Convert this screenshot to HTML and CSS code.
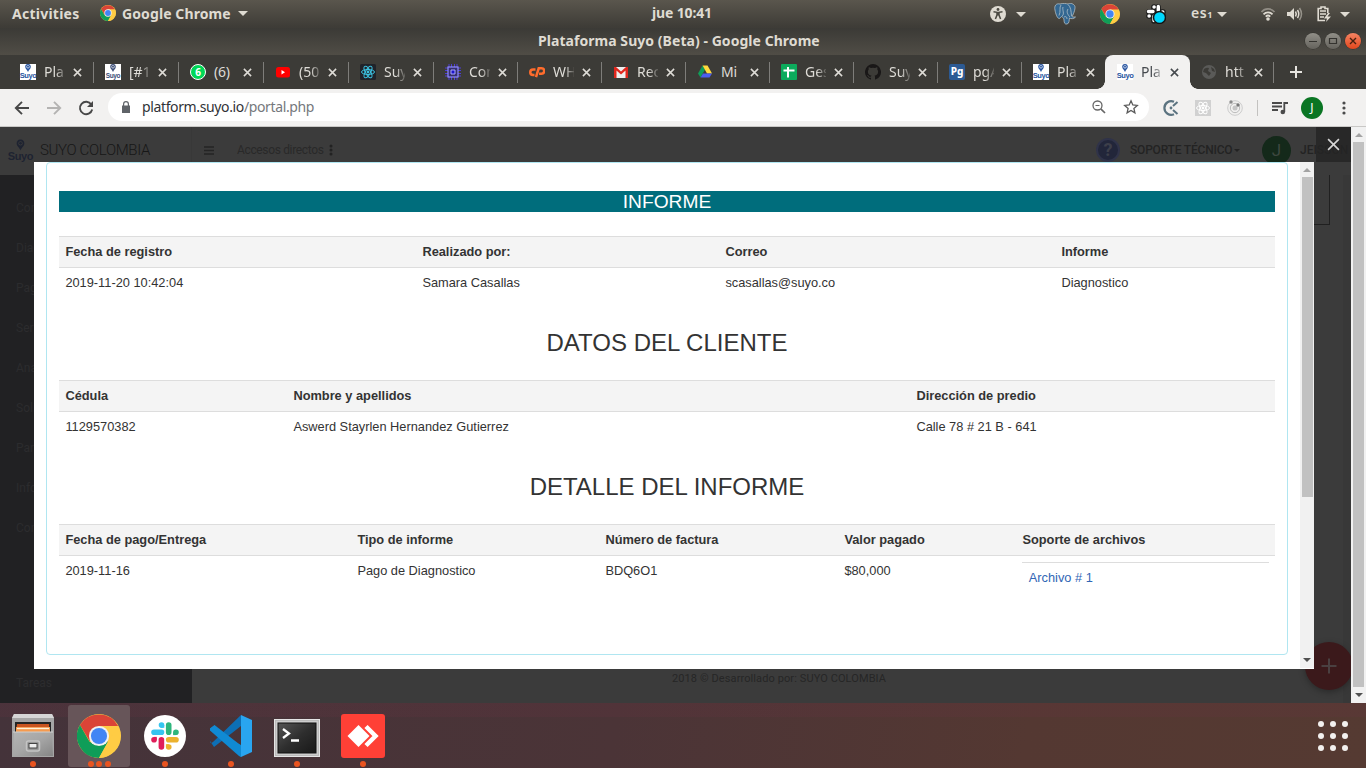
FILE: index.html
```html
<!DOCTYPE html>
<html lang="es">
<head>
<meta charset="utf-8">
<title>Plataforma Suyo (Beta)</title>
<link rel="stylesheet" href="styles.css">
</head>
<body>
<svg class="defs" width="0" height="0">
  <symbol id="chrome" viewBox="0 0 48 48">
    <circle cx="24" cy="24" r="24" fill="#fc4"/>
    <path d="M3.2 12A24 24 0 0 1 44.8 13H24L14 30Z" fill="#db4437"/>
    <path d="M3.2 12 13.5 30 20 34 34 30 24 48A24 24 0 0 1 3.2 12Z" fill="#0f9d58"/>
    <path d="M34 30 44.8 13A24 24 0 0 1 24 48Z" fill="#fc4"/>
    <circle cx="24" cy="24" r="11" fill="#f1f1f1"/><circle cx="24" cy="24" r="8.8" fill="#4285f4"/>
  </symbol>
  <symbol id="x" viewBox="0 0 10 10"><path d="M1 1 9 9M9 1 1 9" fill="none" stroke="currentColor" stroke-width="1.7"/></symbol>
  <symbol id="caret" viewBox="0 0 10 5"><path d="M0 0H10L5 5Z" fill="currentColor"/></symbol>
  <symbol id="pin" viewBox="0 0 8 8"><path fill-rule="evenodd" d="M4 0C6 0 6.8 1.3 6.8 2.8 6.8 5 4.800 5.800 4 8 3.200 5.800 1.200 5 1.200 2.800 1.200 1.300 2 0 4 0ZM4 1.200A1.600 1.600 0 1 0 4 4.400 1.600 1.600 0 1 0 4 1.200Z" fill="currentColor"/><circle cx="4" cy="2.800" r="1" fill="currentColor"/></symbol>
  <symbol id="atom" viewBox="0 0 16 16"><g fill="none" stroke="currentColor"><ellipse cx="8" cy="8" rx="6.500" ry="2.500"/><ellipse cx="8" cy="8" rx="6.500" ry="2.500" transform="rotate(60 8 8)"/><ellipse cx="8" cy="8" rx="6.500" ry="2.500" transform="rotate(120 8 8)"/></g><circle cx="8" cy="8" r="1.400" fill="currentColor"/></symbol>
</svg>

<header class="panel">
  <span class="activities">Activities</span>
  <svg class="app-icon" width="16" height="16"><use href="#chrome"/></svg>
  <span class="app-name">Google Chrome</span>
  <svg class="caret" width="10" height="5"><use href="#caret"/></svg>
  <span class="clock">jue 10:41</span>
  <div class="tray">
    <svg width="16" height="16" viewBox="0 0 16 16"><circle cx="8" cy="8" r="8" fill="#dfdbd2"/><circle cx="8" cy="3.500" r="1.400" fill="#4b4942"/><path d="M3.500 5.800 7 6.300V9L5.400 13M12.500 5.800 9 6.300V9L10.600 13M8 6V9.500" fill="none" stroke="#4b4942" stroke-width="1.500"/></svg>
    <svg width="10" height="5"><use href="#caret"/></svg>
    <svg width="22" height="22" viewBox="0 0 22 22"><path d="M6 1C2 0 0 3 1 7 1.600 10.500 3 15 5 15.500 6 15.600 7 14 7.500 13.500 9 14.500 10 15 10 17 10 20 11 21.500 13 21 15.500 20.500 15 17 15.500 15 17 16 20 16 21.500 14 19.500 14 18.500 14 18 13.500 20 10.500 22 4 20.500 2.500 18.500 0 15.500 0 14 1 12 .5 9 0 6 1Z" fill="#336791" stroke="#c3cbd0" stroke-width=".7"/><path d="M7 2C5 4 7 9 5 12.500M8 13C11 11 8 7 9 4M14 1.500C17 4 17 8 17.500 13M14 6C12 9 14 12 16 14M10 14C12 13 13 14 13 16" fill="none" stroke="#c3cbd0" stroke-width=".7"/></svg>
    <svg width="20" height="20"><use href="#chrome"/></svg>
    <svg width="20" height="20" viewBox="0 0 20 20"><g stroke="#1b1b1b" stroke-width="5.600" stroke-linecap="round" fill="none"><path d="M8 3V7M3 8H7M12 3V7M16 8H17M3 12H7M8 16V17"/></g><g stroke="#fff" stroke-width="3.400" stroke-linecap="round" fill="none"><path d="M12.300 2.500V7M2.500 7.500H7M8 3H8.200M16.500 8H16.800M3 12H3.300M8 12.300V16.500"/></g><circle cx="13.500" cy="13.500" r="6" fill="#00d8ff" stroke="#151515" stroke-width="1.500"/></svg>
    <span class="lang">es<small>1</small></span>
    <svg width="10" height="5"><use href="#caret"/></svg>
    <svg width="16" height="14" viewBox="0 0 16 14"><g fill="none" stroke="#dfdbd2" stroke-width="1.800"><path d="M1.500 5C5 .8 11 .8 14.500 5" opacity=".45"/><path d="M3.500 7.300C6 4.700 10 4.700 12.500 7.300"/><path d="M5.700 9.600C7 8.400 9 8.400 10.300 9.600"/></g><circle cx="8" cy="12" r="1.800" fill="#dfdbd2"/></svg>
    <svg width="16" height="14" viewBox="0 0 16 14"><path d="M0 5H3L7 1V13L3 9H0Z" fill="#dfdbd2"/><g fill="none" stroke="#dfdbd2" stroke-width="1.500"><path d="M8.500 4.500Q10 7 8.500 9.500M10.500 3Q13 7 10.500 11"/><path d="M12.500 1Q16.500 7 12.500 13" opacity=".5"/></g></svg>
    <svg width="14" height="16" viewBox="0 0 14 16"><path d="M8 14.500H1.200V2.500H4V1H8V2.500H10.800V7" fill="none" stroke="#dfdbd2" stroke-width="1.600"/><path d="M3 5H9M3 8H9M3 11H7" stroke="#dfdbd2" stroke-width="1.600"/><path d="M11 7 7 12.500H10L9 16 14 10.500H10.500L13 7Z" fill="#dfdbd2"/></svg>
    <svg width="10" height="5"><use href="#caret"/></svg>
  </div>
</header>

<div class="titlebar">
  <span class="win-title">Plataforma Suyo (Beta) - Google Chrome</span>
  <div class="win-buttons">
    <svg class="wb" viewBox="0 0 16 16"><path d="M4 8.500H12" stroke="#34332f" stroke-width="1.200"/></svg>
    <svg class="wb" viewBox="0 0 16 16"><path d="M4.500 5.500H11.500V10.500H4.500Z" fill="none" stroke="#34332f" stroke-width="1.200"/></svg>
    <svg class="wb wb-close" viewBox="0 0 16 16"><path d="M5 5 11 11M11 5 5 11" stroke="#47200f" stroke-width="1.400"/></svg>
  </div>
</div>

<nav class="tabs">
  <div class="tab wide"><span class="suyo-fav"><svg width="8" height="8"><use href="#pin"/></svg><b>Suyo</b></span><span class="tt">Pla</span><svg class="tx"><use href="#x"/></svg></div>
  <div class="tab wide"><span class="suyo-fav dim"><svg width="8" height="8"><use href="#pin"/></svg><b>Suyo</b></span><span class="tt">[#1</span><svg class="tx"><use href="#x"/></svg></div>
  <div class="tab wide"><span class="fav whats">6</span><span class="tt plain">(6)</span><svg class="tx"><use href="#x"/></svg></div>
  <div class="tab wide"><svg class="fav" viewBox="0 0 16 16"><rect x="1" y="3" width="14" height="10.500" rx="2.500" fill="#f00"/><path d="M6.500 6V10.500L10 8.200Z" fill="#fff"/></svg><span class="tt">(50</span><svg class="tx"><use href="#x"/></svg></div>
  <div class="tab wide"><svg class="fav react" viewBox="0 0 16 16"><rect width="16" height="16" rx="1.500" fill="#20232a"/><use href="#atom"/></svg><span class="tt">Suy</span><svg class="tx"><use href="#x"/></svg></div>
  <div class="tab"><svg class="fav" viewBox="0 0 16 16"><path d="M4 0V16M6.500 0V16M9.500 0V16M12 0V16M0 4H16M0 6.500H16M0 9.500H16M0 12H16" stroke="#4c3fd8"/><rect x="3" y="3" width="10" height="10" fill="#35306c" stroke="#8f8bff" stroke-width="1.200"/><path d="M6 6H10V10H6Z" fill="#1c15c9" stroke="#aaa6ff"/></svg><span class="tt">Con</span><svg class="tx"><use href="#x"/></svg></div>
  <div class="tab"><svg class="fav" viewBox="0 0 16 16"><path d="M6.500 5.500H4A2.600 2.600 0 0 0 4 11H5.500M7 13.200 9.700 4.300H12.500A2.600 2.600 0 0 1 12.500 9.700H10" fill="none" stroke="#ff6c2c" stroke-width="2.500"/></svg><span class="tt">WH</span><svg class="tx"><use href="#x"/></svg></div>
  <div class="tab"><svg class="fav" viewBox="0 0 16 16"><path d="M2 3H14V14H2Z" fill="#eee"/><path d="M1 3H3L8 7.500 13 3H15V14H12.500V6.500L8 10.500 3.500 6.500V14H1Z" fill="#e0261d"/></svg><span class="tt">Rec</span><svg class="tx"><use href="#x"/></svg></div>
  <div class="tab"><svg class="fav" viewBox="0 0 16 16"><path d="M5.500 1.500 1 9.500 3.500 13.500 8 5.500Z" fill="#0f9d58"/><path d="M5.500 1.500H10.500L15 9.500H10Z" fill="#ffd93d"/><path d="M6 9.500H15L12.500 13.500H3.500Z" fill="#4a5ff0"/></svg><span class="tt plain">Mi</span><svg class="tx"><use href="#x"/></svg></div>
  <div class="tab"><svg class="fav" viewBox="0 0 16 16"><rect width="16" height="16" rx="1" fill="#0cab5c"/><path d="M2.500 6.500H13.500M7 3V13.500" stroke="#fff" stroke-width="2"/></svg><span class="tt">Ges</span><svg class="tx"><use href="#x"/></svg></div>
  <div class="tab"><svg class="fav" viewBox="0 0 16 16"><path d="M8 0A8 8 0 0 0 5.500 15.600C6 15.700 6 15.400 6 15.200V13.800C3.800 14.200 3.300 12.800 3.300 12.800 2.900 11.900 2.400 11.600 2.400 11.600 1.700 11.100 2.500 11.100 2.500 11.100 3.300 11.200 3.700 12 3.700 12 4.400 13.200 5.500 12.800 6 12.600 6.100 12.100 6.300 11.700 6.500 11.500 4.700 11.300 2.900 10.600 2.900 7.500 2.900 6.700 3.200 5.900 3.700 5.400 3.700 5.200 3.400 4.400 3.800 3.300 3.800 3.300 4.500 3.100 6 4.100A7.500 7.500 0 0 1 10 4.100C11.500 3.100 12.200 3.300 12.200 3.300 12.600 4.400 12.300 5.200 12.300 5.400 12.800 5.900 13.100 6.700 13.100 7.500 13.100 10.600 11.300 11.300 9.500 11.500 9.800 11.700 10 12.200 10 13V15.200C10 15.400 10.100 15.700 10.500 15.600A8 8 0 0 0 8 0Z" fill="#191717"/></svg><span class="tt">Suy</span><svg class="tx"><use href="#x"/></svg></div>
  <div class="tab"><span class="fav pg">Pg</span><span class="tt">pgA</span><svg class="tx"><use href="#x"/></svg></div>
  <div class="tab last"><span class="suyo-fav"><svg width="8" height="8"><use href="#pin"/></svg><b>Suyo</b></span><span class="tt">Pla</span><svg class="tx"><use href="#x"/></svg></div>
  <div class="tab active"><span class="suyo-fav"><svg width="8" height="8"><use href="#pin"/></svg><b>Suyo</b></span><span class="tt">Pla</span><svg class="tx"><use href="#x"/></svg></div>
  <div class="tab"><svg class="fav" viewBox="0 0 16 16"><circle cx="8" cy="8" r="7" fill="#5a5a58"/><path d="M3 5Q6 3 8 4L7 7 10 9 8 12 5 9 2 8ZM10 3 13 5 14 8 11 7Z" fill="#3c3b37"/></svg><span class="tt">htt</span><svg class="tx"><use href="#x"/></svg></div>
  <svg class="new-tab" viewBox="0 0 12 12"><path d="M6 0V12M0 6H12" stroke="#e6e4df" stroke-width="2"/></svg>
</nav>

<div class="toolbar">
  <svg class="nav-ic" viewBox="0 0 16 16"><path d="M15 8H2M8 1.800 1.800 8 8 14.200" fill="none" stroke="#474747" stroke-width="1.900"/></svg>
  <svg class="nav-ic" viewBox="0 0 16 16"><path d="M1 8H14M8 1.800 14.200 8 8 14.200" fill="none" stroke="#b4b3b2" stroke-width="1.900"/></svg>
  <svg class="nav-ic" viewBox="0 0 16 16"><path d="M13.300 4.500A6.200 6.200 0 1 0 14.200 9.500" fill="none" stroke="#474747" stroke-width="1.900"/><path d="M15 1V7H9Z" fill="#474747"/></svg>
  <div class="omnibox">
    <svg class="lock" viewBox="0 0 10 12"><path d="M1 4.500H9V12H1Z" fill="#5f6368"/><path d="M2.600 5V3A2.400 2.400 0 0 1 7.400 3V5" fill="none" stroke="#5f6368" stroke-width="1.200"/></svg>
    <span class="url">platform.suyo.io<i>/portal.php</i></span>
    <svg class="zoom-ic" viewBox="0 0 14 14"><circle cx="5.500" cy="5.500" r="4.500" fill="none" stroke="#666" stroke-width="1.300"/><path d="M3.500 5.500H7.500" stroke="#666"/><path d="M8.800 8.800 13 13" stroke="#666" stroke-width="1.700"/></svg>
    <svg class="star" viewBox="0 0 16 16"><path d="M8 1.800 9.800 6 14.300 6.400 10.900 9.400 11.900 13.800 8 11.500 4.100 13.800 5.100 9.400 1.700 6.400 6.200 6Z" fill="none" stroke="#5a5a5a" stroke-width="1.300"/></svg>
  </div>
  <div class="ext">
    <svg viewBox="0 0 16 16"><path d="M11 1.800A6.800 6.800 0 1 0 11 14.200" fill="none" stroke="#5b7380" stroke-width="2.200"/><circle cx="8" cy="8" r="1.400" fill="#5b7380"/><path d="M10 6 14.500 2M10 10 14.500 14" stroke="#5b7380" stroke-width="2"/></svg>
    <svg class="ext-react" viewBox="0 0 16 16"><rect width="16" height="16" fill="#d1d1d1"/><use href="#atom"/></svg>
    <svg viewBox="0 0 16 16"><circle cx="8" cy="8" r="7.300" fill="none" stroke="#ccc"/><circle cx="8" cy="8" r="4.700" fill="none" stroke="#bbb"/><circle cx="8" cy="8" r="2.500" fill="#c5c5c5"/><circle cx="4" cy="2" r="1.700" fill="#8b8b8b"/><circle cx="11" cy="5" r="1.700" fill="#777"/></svg>
    <span class="sep"></span>
    <svg viewBox="0 0 16 16"><path d="M0 3H10M0 6.500H10M0 10H6M12.300 12V3H16" fill="none" stroke="#4a4a4a" stroke-width="1.800"/><circle cx="10.800" cy="12" r="2.300" fill="#4a4a4a"/></svg>
    <span class="avatar">J</span>
    <svg viewBox="0 0 16 16"><g fill="#4a4a4a"><circle cx="8" cy="3" r="1.600"/><circle cx="8" cy="8" r="1.600"/><circle cx="8" cy="13" r="1.600"/></g></svg>
  </div>
</div>

<main class="viewport">
  <div class="page">
    <div class="page-head">
      <div class="brand"><span class="brand-logo"><svg width="11" height="12"><use href="#pin"/></svg><b>Suyo</b></span><span class="brand-name">SUYO COLOMBIA</span></div>
      <svg class="burger" viewBox="0 0 10 9"><path d="M0 1H10M0 4.500H10M0 8H10" stroke="#242424" stroke-width="1.300"/></svg>
      <span class="shortcuts">Accesos directos</span>
      <svg class="kebab" viewBox="0 0 4 12"><g fill="#222"><circle cx="2" cy="2" r="1.500"/><circle cx="2" cy="6" r="1.500"/><circle cx="2" cy="10" r="1.500"/></g></svg>
      <span class="help">?</span>
      <span class="support">SOPORTE TÉCNICO</span>
      <svg class="mini" width="6" height="3"><use href="#caret"/></svg>
      <span class="user-dot">J</span>
      <span class="user">JEISSON</span>
      <svg class="mini" width="6" height="3"><use href="#caret"/></svg>
    </div>
    <div class="page-body">
      <aside class="side">
        <span>Con</span><span>Diag</span><span>Pag</span><span>Serv</span><span>Ana</span><span>Soli</span><span>Par</span><span>Info</span><span>Con</span><span class="tareas">Tareas</span>
      </aside>
      <section class="canvas">
        <div class="panel-edge"></div>
        <footer class="copy">2018 © Desarrollado por: SUYO COLOMBIA</footer>
      </section>
    </div>
    <svg class="fab" viewBox="0 0 48 48"><circle cx="24" cy="24" r="24" fill="#3b191b"/><path d="M24 16.500V31.500M16.500 24H31.500" stroke="#4a4041" stroke-width="2"/></svg>
    <span class="close"><svg width="13" height="13" viewBox="0 0 12 12"><path d="M1 1 11 11M11 1 1 11" stroke="#d6d6d6" stroke-width="1.500"/></svg></span>

    <div class="modal">
      <div class="modal-body">
        <div class="report">
          <div class="banner">INFORME</div>
          <table>
            <colgroup><col style="width:357px"><col style="width:303px"><col style="width:336px"><col></colgroup>
            <tr><th>Fecha de registro</th><th>Realizado por:</th><th>Correo</th><th>Informe</th></tr>
            <tr><td>2019-11-20 10:42:04</td><td>Samara Casallas</td><td>scasallas@suyo.co</td><td>Diagnostico</td></tr>
          </table>
          <h3>DATOS DEL CLIENTE</h3>
          <table>
            <colgroup><col style="width:228px"><col style="width:623px"><col></colgroup>
            <tr><th>Cédula</th><th>Nombre y apellidos</th><th>Dirección de predio</th></tr>
            <tr><td>1129570382</td><td>Aswerd Stayrlen Hernandez Gutierrez</td><td>Calle 78 # 21 B - 641</td></tr>
          </table>
          <h3>DETALLE DEL INFORME</h3>
          <table>
            <colgroup><col style="width:292px"><col style="width:248px"><col style="width:239px"><col style="width:178px"><col></colgroup>
            <tr><th>Fecha de pago/Entrega</th><th>Tipo de informe</th><th>Número de factura</th><th>Valor pagado</th><th>Soporte de archivos</th></tr>
            <tr><td>2019-11-16</td><td>Pago de Diagnostico</td><td>BDQ6O1</td><td>$80,000</td><td><div class="file"><a>Archivo # 1</a></div></td></tr>
          </table>
        </div>
      </div>
      <div class="bar inner"><svg class="up" viewBox="0 0 8 4"><path d="M0 4H8L4 0Z" fill="#a3a3a3"/></svg><span class="thumb"></span><svg class="down" viewBox="0 0 8 4"><path d="M0 0H8L4 4Z" fill="#505050"/></svg></div>
    </div>
  </div>
  <div class="bar outer"><svg class="up" viewBox="0 0 8 4"><path d="M0 4H8L4 0Z" fill="#a3a3a3"/></svg><span class="thumb"></span><svg class="down" viewBox="0 0 8 4"><path d="M0 0H8L4 4Z" fill="#505050"/></svg></div>
</main>

<footer class="dock">
  <div class="app"><svg width="44" height="44" viewBox="0 0 44 44"><defs><linearGradient id="fm" x2="1" y2="1"><stop stop-color="#b4b4b4"/><stop offset=".5" stop-color="#a6a6a6"/><stop offset="1" stop-color="#858585"/></linearGradient></defs><path d="M3 0H41L43 4V43H1V4Z" fill="#a5a5a5"/><path d="M3 0H41L43 4H1Z" fill="#d5d5d5"/><rect x="4" y="8" width="36" height="10" fill="#242424"/><path d="M6 10H38V18H5Z" fill="#c9541f"/><path d="M5 13H39V18H5Z" fill="#f59a4f"/><path d="M6 14.500H38" stroke="#fff0d8" stroke-width="1.300"/><path d="M3 18H41L42 42H2Z" fill="url(#fm)"/><path d="M2 18H42" stroke="#cfcfcf"/><rect x="15.500" y="27" width="13" height="10" rx="2" fill="#999" stroke="#c4c4c4" stroke-width="1.500"/><rect x="18" y="29.500" width="8" height="4.500" fill="#eee" stroke="#444"/></svg><i></i></div>
  <div class="app current"><svg width="44" height="44"><use href="#chrome"/></svg><i></i><i></i><i></i></div>
  <div class="app"><svg width="44" height="44" viewBox="0 0 44 44"><circle cx="22" cy="22" r="21" fill="#fff"/><g fill="none" stroke-width="5.600" stroke-linecap="round"><path d="M11 18.300H18.500M18.500 11V11.100" stroke="#36c5f0"/><path d="M25.700 11V18.300M33 18.300H32.900" stroke="#2eb67d"/><path d="M18.400 25.700V33M11 25.700H11.100" stroke="#e01e5a"/><path d="M25.700 25.700H33M25.700 33H25.800" stroke="#ecb22e"/></g><path d="M18.500 11H21.300V13.800H18.500Z" fill="#36c5f0"/><path d="M30.100 18.300H32.900V21.100H30.100Z" fill="#2eb67d"/><path d="M11 22.900H13.800V25.700H11Z" fill="#e01e5a"/><path d="M22.900 30.200H25.700V33H22.900Z" fill="#ecb22e"/></svg><i></i></div>
  <div class="app"><svg width="44" height="44" viewBox="0 0 44 44"><path d="M32 1 4.500 27.500Q2 30 1 28V27L5 33 32 12Z" fill="#0d6fb5"/><path d="M32 43 5.500 11.500 1 14.500V16L32 31Z" fill="#0c88d0"/><path d="M1 14.500 5.500 11 32 31.500V43L30 42 1 16.500Z" fill="#108ad3"/><path d="M32 1 43 6V38L32 43Z" fill="#29a5f0"/></svg><i></i></div>
  <div class="app"><svg width="46" height="44" viewBox="0 0 46 44"><defs><linearGradient id="tm" x2="1" y2="1"><stop stop-color="#555"/><stop offset=".5" stop-color="#2e2e2e"/><stop offset="1" stop-color="#181818"/></linearGradient></defs><rect x=".5" y="5.500" width="45" height="37" fill="#bbb" stroke="#e5e5e5"/><rect x="2" y="7" width="42" height="34" fill="#cdcdcd"/><rect x="4" y="9" width="38" height="30" fill="url(#tm)" stroke="#111"/><path d="M9 15 15 19.500 9 24M17 26.500H25" fill="none" stroke="#fff" stroke-width="2.300"/></svg><i></i></div>
  <div class="app"><svg width="44" height="44" viewBox="0 0 44 44"><rect width="44" height="44" rx="3" fill="#ff4036"/><path d="M6.500 22 17.500 11 28.500 22 17.500 33Z" fill="#fff"/><path d="M25 12.500 34.500 22 25 31.500" fill="none" stroke="#fff" stroke-width="4.500"/></svg><i></i></div>
  <div class="grid-btn"><b></b><b></b><b></b><b></b><b></b><b></b><b></b><b></b><b></b></div>
</footer>
</body>
</html>
```

FILE: styles.css
```css
* { box-sizing: border-box; }
body { margin: 0; width: 1366px; height: 768px; overflow: hidden; display: flex; flex-direction: column; font-family: "Noto Sans", sans-serif; background: #3b3b3b; }
svg { display: block; flex: none; }
.defs { position: absolute; }

/* desktop panel */
.panel { height: 28px; flex: none; display: flex; align-items: center; padding: 0 0 2px 12px; background: linear-gradient(#5a564d, #3e3c37 96%); color: #dfdbd2; font-weight: 700; font-size: 14px; line-height: 26px; }
.activities { width: 88px; letter-spacing: .25px; padding-top: 1px; }
.app-name { margin-left: 6px; width: 116px; letter-spacing: .1px; white-space: nowrap; padding-top: 1px; }
.clock { margin-left: 404px; width: 64px; white-space: nowrap; letter-spacing: -.15px; }
.tray { margin-left: 274px; display: grid; grid-template-columns: 26px 38px 46px 46px 45px 26px 43px 27px 30px 23px 10px; align-items: center; height: 26px; }
.lang { font-weight: 600; letter-spacing: .6px; line-height: 26px; }
.lang small { font-size: 9px; font-weight: 700; }

.titlebar { height: 27px; flex: none; display: flex; align-items: center; background: linear-gradient(#3b3a36, #504d46); color: #dfdbd2; font-weight: 700; font-size: 14px; }
.win-title { margin: -2px 0 0 538px; width: 767px; line-height: 25px; white-space: nowrap; letter-spacing: .05px; }
.win-buttons { display: flex; gap: 4px; }
.wb { width: 16px; height: 16px; border-radius: 50%; background: linear-gradient(#918f88, #65635d); box-shadow: 0 0 0 .5px #33322e; margin-top: -1px; }
.wb-close { background: linear-gradient(#f58463, #e2471d); }

/* browser tabs */
.tabs { height: 34px; flex: none; background: #3c3b37; display: flex; padding-left: 9px; color: #dedcd7; }
.tab { width: 84px; flex: none; height: 34px; padding: 0 0 0 11px; display: flex; align-items: center; position: relative; }
.tab.wide { width: 85px; }
.tab::after { content: ""; position: absolute; right: 0; top: 7px; width: 1px; height: 21px; background: #7e7d7a; }
.tab.last::after, .tab.active::after { display: none; }
.tab.active { width: 85px; padding-left: 12px; margin-left: -1px; background: #f2f1f0; border-radius: 8px 8px 0 0; color: #45494d; }
.tab.active::before { content: ""; position: absolute; left: -8px; right: -8px; bottom: 0; height: 8px; background: radial-gradient(circle at 0 0, transparent 7.5px, #f2f1f0 8px) left / 8px 8px no-repeat, radial-gradient(circle at 100% 0, transparent 7.5px, #f2f1f0 8px) right / 8px 8px no-repeat; }
.fav { width: 16px; height: 16px; flex: none; margin-top: -1px; }
.react { color: #3cc3e2; }
.whats { border-radius: 50%; background: #00d757; border: 1px solid #fff; color: #fff; font-size: 10px; font-weight: 700; line-height: 14px; text-align: center; }
.pg { background: #2c5a94; color: #fff; font-size: 10px; font-weight: 800; line-height: 14px; text-align: center; border-radius: 2px; }
.suyo-fav { width: 16px; height: 16px; flex: none; margin-top: -1px; background: #fff; color: #2754a0; display: flex; flex-direction: column; align-items: center; }
.suyo-fav b { font: 700 7.5px/7px "Liberation Sans", sans-serif; letter-spacing: -.4px; }
.suyo-fav.dim { color: #3c4e78; }
.suyo-fav.dim b { font-size: 6.5px; }
.tt { margin-left: 8px; width: 21px; height: 24px; overflow: hidden; white-space: nowrap; font-size: 14px; line-height: 24px; -webkit-mask-image: linear-gradient(90deg, #000 55%, rgba(0,0,0,.2)); mask-image: linear-gradient(90deg, #000 55%, rgba(0,0,0,.2)); }
.tt.plain { letter-spacing: -.2px; -webkit-mask-image: none; mask-image: none; }
.tx { width: 9px; height: 9px; margin-left: 8px; }
.new-tab { width: 12px; height: 12px; margin: 11px 0 0 16px; }

.toolbar { height: 38px; flex: none; background: #f2f1f0; border-bottom: 1px solid #c9c8c6; display: flex; align-items: center; padding-left: 14px; }
.nav-ic { width: 16px; height: 16px; margin-right: 16px; }
.nav-ic:nth-child(3) { margin-right: 14px; }
.omnibox { width: 1041px; height: 28px; flex: none; border-radius: 14px; background: #fff; display: flex; align-items: center; padding-left: 13px; margin-top: -1px; }
.lock { width: 10px; height: 12px; }
.url { margin-left: 11px; width: 950px; font-size: 14px; line-height: 26px; letter-spacing: -.37px; color: #303236; white-space: nowrap; }
.url i { font-style: normal; color: #75787c; }
.zoom-ic { width: 14px; height: 14px; }
.star { width: 16px; height: 16px; margin-left: 17px; }
.ext { display: grid; grid-template-columns: 32px 32px 30px 15px 29px 35px 16px; align-items: center; margin-left: 14px; }
.ext svg { width: 16px; height: 16px; }
.ext-react { color: #fff; }
.sep { width: 1px; height: 16px; background: #c3c2c0; }
.avatar { width: 22px; height: 22px; border-radius: 50%; background: #0a7523; color: #fff; font-size: 12px; line-height: 22px; text-align: center; }

/* dimmed page */
.viewport { height: 576px; flex: none; display: flex; }
.page { width: 1351px; position: relative; display: flex; flex-direction: column; overflow: hidden; font-family: Roboto, sans-serif; }
.page-head { height: 48px; flex: none; background: #3b3b3b; display: flex; align-items: center; padding-bottom: 2px; color: #232323; font-size: 12px; white-space: nowrap; }
.brand { width: 192px; flex: none; height: 48px; display: flex; align-items: center; padding-left: 8px; border-right: 1px solid #383838; }
.brand-logo { width: 25px; color: #1e2331; display: flex; flex-direction: column; align-items: center; }
.brand-logo b { font: 700 11px/11px "Liberation Sans", sans-serif; letter-spacing: -.4px; }
.brand-name { margin-left: 7px; font-size: 15px; font-weight: 300; letter-spacing: -.35px; color: #171717; }
.burger { width: 10px; height: 9px; margin-left: 12px; }
.shortcuts { margin-left: 23px; width: 86px; flex: none; letter-spacing: -.35px; color: #292929; }
.kebab { width: 4px; height: 12px; margin-left: 6px; }
.help { margin-left: 763px; flex: none; width: 24px; height: 24px; border-radius: 50%; background: #22263a; border: 2px solid #303349; color: #3d3f4a; font-weight: 700; font-size: 18px; line-height: 20px; text-align: center; }
.support { margin-left: 10px; width: 102px; flex: none; font-weight: 500; letter-spacing: -.2px; }
.mini { margin-left: 2px; color: #222; }
.user-dot { margin-left: 22px; flex: none; width: 29px; height: 29px; border-radius: 50%; background: #14291a; color: #3d473f; font-size: 17px; line-height: 29px; text-align: center; }
.user { margin-left: 9px; width: 48px; flex: none; font-weight: 500; }
.page-body { flex: 1; display: flex; }
.side { width: 192px; background: #212123; color: #2c2c2e; font-size: 12px; padding: 13px 16px 0; display: flex; flex-direction: column; }
.side span { height: 40px; line-height: 40px; }
.side .tareas { margin-top: 115px; }
.canvas { flex: 1; display: flex; flex-direction: column; justify-content: space-between; background: linear-gradient(90deg, #3b3b3b 1151px, #383838 1151px); }
.panel-edge { width: 1138px; height: 50px; border: solid #202020; border-width: 0 1px 1px 0; }
.copy { padding: 0 0 17px 480px; font-size: 11px; line-height: 14px; letter-spacing: .1px; color: #262626; }
.fab { position: absolute; left: 1305px; top: 515px; width: 48px; height: 48px; filter: drop-shadow(0 2px 3px rgba(0,0,0,.3)); }
.close { position: absolute; left: 1316px; top: 0; width: 35px; height: 35px; background: rgba(36,36,36,.8); display: flex; align-items: center; justify-content: center; }

/* report dialog */
.modal { position: absolute; left: 34px; top: 35px; width: 1280px; height: 507px; background: #fff; display: flex; font-family: "Liberation Sans", Arial, sans-serif; }
.modal-body { width: 1266px; padding: 0 12px 14px; }
.report { height: 493px; border: 1px solid #b0e6f1; border-radius: 4px; padding: 28px 12px 0; color: #333; }
.banner { height: 21px; background: #006d7c; color: #fff; font-size: 19.2px; line-height: 21px; text-align: center; margin-bottom: 24px; }
table { width: 1216px; table-layout: fixed; border-collapse: separate; border-spacing: 0; font-size: 12.8px; line-height: 18px; }
th, td { border-top: 1px solid #ddd; padding: 6px 6.4px; height: 31px; text-align: left; vertical-align: top; }
th { background: #f4f4f4; }
h3 { margin: 0; height: 82px; padding-top: 31px; font-weight: 400; font-size: 24px; line-height: 28px; text-align: center; }
.file { border-top: 1px solid #ddd; padding: 6px 6.4px; }
.file a { color: #3166b5; }

.bar { background: #f1f1f1; display: flex; flex-direction: column; align-items: center; flex: none; }
.bar svg { width: 8px; height: 4px; }
.thumb { width: 11px; background: #c1c1c1; }
.inner { width: 14px; height: 506px; }
.inner .up { margin: 6px 0 5px; }
.inner .thumb { height: 320px; }
.inner .down { margin-top: 161px; }
.outer { width: 15px; }
.outer .up { margin: 6px 0 5px; }
.outer .thumb { height: 545px; }
.outer .down { margin-top: 6px; }

/* dock */
.dock { height: 65px; flex: none; display: flex; padding-top: 2px; background: linear-gradient(rgba(105,50,65,.2) 14px, transparent 14px), linear-gradient(100deg, #44333a, #4b3437 45%, #543832 75%, #553a32); }
.app { width: 62px; height: 62px; margin-left: 2px; margin-right: 2px; border-radius: 3px; display: flex; flex-wrap: wrap; justify-content: center; align-content: flex-start; column-gap: 2.500px; padding: 9px 4px 0; }
.app svg { margin: 0 4px 3px; }
.app i { width: 6px; height: 6px; border-radius: 50%; background: #e95420; }
.current { background: #675559; }
.grid-btn { margin: 16px 0 0 922px; width: 32px; height: 32px; display: grid; grid-template-columns: repeat(3, 6px); grid-auto-rows: 6px; gap: 6px; }
.grid-btn b { background: #f2f0ee; border-radius: 50%; }
```
